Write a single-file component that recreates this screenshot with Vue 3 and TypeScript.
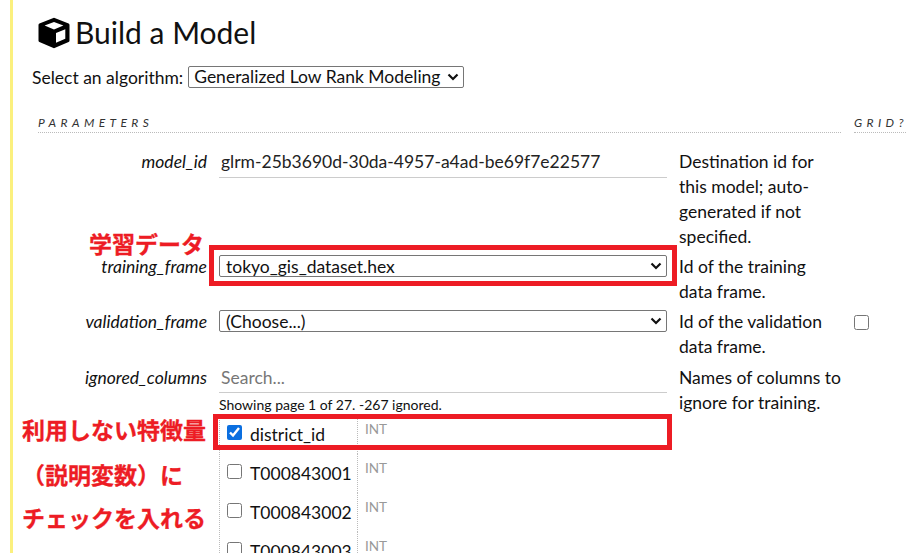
<script setup lang="ts">
const columns = [
  { name: 'district_id', checked: true },
  { name: 'T000843001', checked: false },
  { name: 'T000843002', checked: false },
  { name: 'T000843003', checked: false },
]
</script>

<template>
  <div class="page">
    <div class="content">
      <h1 class="title">
        <svg class="cube" viewBox="0 0 32 32" width="32" height="32" aria-hidden="true">
          <path fill="#000" fill-rule="evenodd" d="M16 .8 30.6 6.6c.5.2.9.7.9 1.3v15.8c0 .6-.3 1.1-.9 1.3L16 31.2 1.4 25c-.5-.2-.9-.7-.9-1.3V7.9c0-.6.4-1.1.9-1.3L16 .8Zm0 4.2L6.6 8.6 16 12.4l9.4-3.8L16 5Zm2 11v9.8l9.3-4V12.2L18 16Z"/>
        </svg>
        <span>Build a Model</span>
      </h1>
      <div class="algo">
        <label>Select an algorithm:</label>
        <select class="algo-select">
          <option>Generalized Low Rank Modeling</option>
        </select>
      </div>

      <div class="heads">
        <div class="head">PARAMETERS</div>
        <div class="head">GRID?</div>
      </div>

      <div class="form">
        <div class="label">model_id</div>
        <div class="ctl"><div class="textbox dark">glrm-25b3690d-30da-4957-a4ad-be69f7e22577</div></div>
        <div class="help">Destination id for this model; auto-generated if not specified.</div>
        <div></div>

        <div class="label">training_frame</div>
        <div class="ctl"><select class="wide"><option>tokyo_gis_dataset.hex</option></select></div>
        <div class="help">Id of the training data frame.</div>
        <div></div>

        <div class="label">validation_frame</div>
        <div class="ctl"><select class="wide"><option>(Choose...)</option></select></div>
        <div class="help">Id of the validation data frame.</div>
        <div class="gridcell"><input type="checkbox" class="box" /></div>

        <div class="label">ignored_columns</div>
        <div class="ctl">
          <div class="textbox muted">Search...</div>
          <div class="paging">Showing page 1 of 27. -267 ignored.</div>
          <div class="col-table">
            <div v-for="c in columns" :key="c.name" class="col-row">
              <div class="col-name">
                <input type="checkbox" class="box" :checked="c.checked" />
                <span>{{ c.name }}</span>
              </div>
              <div class="col-type">INT</div>
            </div>
          </div>
        </div>
        <div class="help">Names of columns to ignore for training.</div>
        <div></div>
      </div>
    </div>

    <div class="note note-1">学習データ</div>
    <div class="frame frame-1"></div>
    <div class="frame frame-2"></div>
    <div class="note note-2">利用しない特徴量</div>
    <div class="note note-3">（説明変数）に</div>
    <div class="note note-4">チェックを入れる</div>
  </div>
</template>

<style>
html, body { margin: 0; background: #fff; overflow: hidden; }
</style>

<style scoped>
.page {
  position: relative;
  width: 906px;
  height: 553px;
  overflow: hidden;
  font-family: Lato, "Noto Sans", sans-serif;
  color: #111;
  font-size: 18px;
}
.content {
  margin-left: 10px;
  height: 553px;
  border-left: 3px solid #fbf07e;
  padding-left: 19px;
  box-sizing: border-box;
  width: 920px;
}
.title {
  display: flex;
  align-items: center;
  gap: 5px;
  margin: 0 0 0 6px;
  padding-top: 16px;
  height: 33px;
  font-weight: 400;
  font-size: 30px;
  line-height: 33px;
}
.algo {
  display: flex;
  align-items: center;
  gap: 5px;
  margin-top: 17px;
  height: 22px;
  font-size: 17.5px;
}
select {
  appearance: none;
  font-family: inherit;
  color: #111;
  background: #fff url("data:image/svg+xml,%3Csvg xmlns='http://www.w3.org/2000/svg' width='12' height='8' viewBox='0 0 12 8'%3E%3Cpath d='M1.5 1.5 6 6l4.5-4.5' fill='none' stroke='%23111' stroke-width='2.2'/%3E%3C/svg%3E") no-repeat right 4px center;
  border: 1px solid #767676;
  border-radius: 2px;
  box-sizing: border-box;
  line-height: 20px;
}
.algo-select {
  font-size: 17.5px;
  height: 22px;
  width: 276px;
  padding: 0 0 0 5px;
}
.heads {
  display: grid;
  grid-template-columns: 803px 1fr;
  column-gap: 13px;
  margin: 27px 0 0 6px;
}
.head {
  font-size: 12px;
  font-style: italic;
  letter-spacing: 4.4px;
  line-height: 16px;
  color: #333;
  height: 17px;
  border-bottom: 1px dotted #bbb;
}
.form {
  display: grid;
  grid-template-columns: 175px 448px 162px 60px;
  column-gap: 12px;
  margin-top: 16px;
  font-size: 17.5px;
}
.form > * { margin-bottom: 5px; }
.form > :nth-child(n+9):nth-child(-n+12) { margin-bottom: 6px; }
.label {
  text-align: right;
  font-style: italic;
  font-size: 17.5px;
  line-height: 25px;
}
.ctl { min-width: 0; }
.textbox {
  height: 29px;
  line-height: 25px;
  padding-left: 2px;
  border-bottom: 1px solid #ccc;
  box-sizing: border-box;
}
.textbox.dark { color: #222; }
.textbox.muted { color: #777; height: 28px; }
.help {
  line-height: 25px;
  font-size: 17.5px;
}
.wide {
  display: block;
  width: 448px;
  height: 22px;
  font-size: 17.5px;
  margin-top: 1px;
  padding: 1px 0 0 6px;
}
.gridcell {
  padding: 4px 0 0 1px;
}
.box {
  width: 15px;
  height: 15px;
  margin: 0;
  accent-color: #0b6fe0;
}
.paging {
  font-size: 14px;
  line-height: 18px;
  margin-top: 3px;
  height: 19px;
  white-space: nowrap;
}
.col-table {
  border-left: 1px dotted #bbb;
}
.col-row {
  display: grid;
  grid-template-columns: 138px 1fr;
  height: 39px;
}
.col-name {
  display: flex;
  align-items: flex-start;
  gap: 8px;
  padding: 8px 0 0 7px;
  border-right: 1px dotted #bbb;
  line-height: 24px;
  font-size: 17.5px;
}
.col-name .box { margin-top: 2px; }
.col-type {
  color: #999;
  font-size: 13.5px;
  line-height: 16px;
  padding: 6px 0 0 7px;
}
.frame {
  position: absolute;
  border: 5px solid #ed1c24;
  box-sizing: border-box;
  pointer-events: none;
}
.frame-1 { left: 209px; top: 245px; width: 468px; height: 41px; }
.frame-2 { left: 213px; top: 414px; width: 459px; height: 36px; }
.note {
  position: absolute;
  color: #ed1c24;
  font-family: "Noto Sans CJK JP", sans-serif;
  font-weight: 700;
  font-size: 23px;
  line-height: 28px;
  white-space: nowrap;
  -webkit-text-stroke: 0.3px #ed1c24;
}
.note-1 { left: 89px; top: 229px; }
.note-2 { left: 22px; top: 415px; }
.note-3 { left: 22px; top: 460px; }
.note-4 { left: 22px; top: 503px; }
</style>
